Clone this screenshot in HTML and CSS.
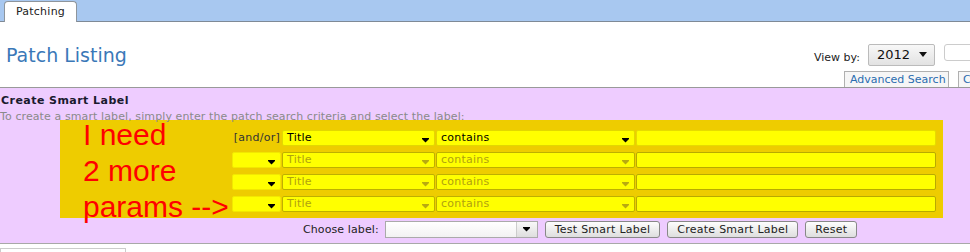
FILE: index.html
```html
<!DOCTYPE html>
<html>
<head>
<meta charset="utf-8">
<link rel="stylesheet" href="styles.css">
</head>
<body>
<div class="topbar"><div class="tab">Patching</div></div>
<div class="header">
  <div class="title-col"><h1 class="title">Patch Listing</h1></div>
  <div class="right-col">
    <div class="viewby">
      <span class="viewby-label">View by:</span>
      <div class="year-btn">2012 <svg class="arr" width="8" height="5" viewBox="0 0 8 5"><path d="M0 0H8L4 5Z" fill="#111"/></svg></div>
      <div class="search-input"></div>
    </div>
    <div class="tabs">
      <div class="subtab">Advanced Search</div>
      <div class="subtab">C</div>
    </div>
  </div>
</div>
<div class="panel">
  <div class="panel-title">Create Smart Label</div>
  <div class="panel-sub">To create a smart label, simply enter the patch search criteria and select the label:</div>
  <div class="highlight">
    <div class="note">
      <div>I need</div>
      <div>2 more</div>
      <div>params --&gt;</div>
    </div>
    <div class="rows">
      <div class="row">
        <div class="andor">[and/or]</div>
        <div class="sel on">Title<svg class="sarr" width="7" height="5" viewBox="0 0 7 5"><path d="M0 0H7V1L3.5 4.5L0 1Z" fill="#000"/></svg></div>
        <div class="sel on">contains<svg class="sarr" width="7" height="5" viewBox="0 0 7 5"><path d="M0 0H7V1L3.5 4.5L0 1Z" fill="#000"/></svg></div>
        <div class="inp on"></div>
      </div>
      <div class="row">
        <div class="sel small"><svg class="sarr" width="7" height="5" viewBox="0 0 7 5"><path d="M0 0H7V1L3.5 4.5L0 1Z" fill="#000"/></svg></div>
        <div class="sel off">Title<svg class="sarr" width="7" height="5" viewBox="0 0 7 5"><path d="M0 0H7V1L3.5 4.5L0 1Z" fill="#b8aa10"/></svg></div>
        <div class="sel off">contains<svg class="sarr" width="7" height="5" viewBox="0 0 7 5"><path d="M0 0H7V1L3.5 4.5L0 1Z" fill="#b8aa10"/></svg></div>
        <div class="inp off"></div>
      </div>
      <div class="row">
        <div class="sel small"><svg class="sarr" width="7" height="5" viewBox="0 0 7 5"><path d="M0 0H7V1L3.5 4.5L0 1Z" fill="#000"/></svg></div>
        <div class="sel off">Title<svg class="sarr" width="7" height="5" viewBox="0 0 7 5"><path d="M0 0H7V1L3.5 4.5L0 1Z" fill="#b8aa10"/></svg></div>
        <div class="sel off">contains<svg class="sarr" width="7" height="5" viewBox="0 0 7 5"><path d="M0 0H7V1L3.5 4.5L0 1Z" fill="#b8aa10"/></svg></div>
        <div class="inp off"></div>
      </div>
      <div class="row">
        <div class="sel small"><svg class="sarr" width="7" height="5" viewBox="0 0 7 5"><path d="M0 0H7V1L3.5 4.5L0 1Z" fill="#000"/></svg></div>
        <div class="sel off">Title<svg class="sarr" width="7" height="5" viewBox="0 0 7 5"><path d="M0 0H7V1L3.5 4.5L0 1Z" fill="#b8aa10"/></svg></div>
        <div class="sel off">contains<svg class="sarr" width="7" height="5" viewBox="0 0 7 5"><path d="M0 0H7V1L3.5 4.5L0 1Z" fill="#b8aa10"/></svg></div>
        <div class="inp off"></div>
      </div>
    </div>
  </div>
  <div class="actions">
    <span class="choose">Choose label:</span>
    <div class="label-sel"><div class="label-field"></div><div class="label-btn"><svg width="7" height="5" viewBox="0 0 7 5"><path d="M0 0H7V1L3.5 4.5L0 1Z" fill="#000"/></svg></div></div>
    <div class="btn">Test Smart Label</div>
    <div class="btn">Create Smart Label</div>
    <div class="btn">Reset</div>
  </div>
</div>
<div class="footer"><div class="footbox"></div></div>
</body>
</html>
```
FILE: styles.css
```css
html, body { margin: 0; padding: 0; }
body {
  width: 970px;
  height: 252px;
  overflow: hidden;
  background: #fff;
  font-family: "DejaVu Sans", Verdana, sans-serif;
  font-size: 11px;
  letter-spacing: 0.25px;
  color: #222;
}
.topbar {
  height: 21px;
  background: #a8c8f0;
  border-bottom: 1px solid #7f8a96;
  display: flex;
  align-items: flex-end;
}
.tab {
  margin-left: 4px;
  margin-bottom: -1px;
  width: 71px;
  height: 20px;
  background: #fff;
  border: 1px solid #8e959c;
  border-bottom: none;
  border-radius: 4px 4px 0 0;
  line-height: 19px;
  text-align: center;
  color: #222;
}
.header {
  height: 65px;
  display: flex;
}
.title-col { width: 808px; flex: none; }
.title {
  margin: 22px 0 0 6px;
  font-size: 19px;
  font-weight: normal;
  line-height: 22px;
  letter-spacing: 0;
  color: #3a78b8;
}
.right-col {
  flex: none;
  width: 200px;
  display: flex;
  flex-direction: column;
  justify-content: space-between;
}
.viewby {
  margin-top: 22px;
  display: flex;
  align-items: flex-start;
  white-space: nowrap;
}
.viewby-label {
  flex: none;
  margin-left: 6px;
  margin-top: 7px;
  line-height: 13px;
  letter-spacing: 0;
  color: #222;
}
.year-btn {
  flex: none;
  margin-left: 8px;
  width: 67px;
  height: 22px;
  border: 1px solid #bbb;
  border-radius: 2px;
  background: linear-gradient(#f8f8f8, #e2e2e2);
  font-size: 13px;
  letter-spacing: 0;
  line-height: 20px;
  padding-left: 8px;
  box-sizing: border-box;
  color: #111;
  display: flex;
  align-items: center;
  gap: 6px;
}
.year-btn .arr { margin-left: 3px; margin-top: -1px; }
.search-input {
  flex: none;
  margin-left: 9px;
  width: 60px;
  height: 17px;
  border: 1px solid #ccc;
  border-radius: 3px;
  box-sizing: border-box;
  background: #fff;
}
.tabs {
  display: flex;
  gap: 9px;
  margin-left: 36px;
}
.subtab {
  flex: none;
  height: 16px;
  line-height: 15px;
  border: 1px solid #b0b0b0;
  border-bottom: none;
  background: #f6f6f6;
  color: #2a6cb0;
  padding: 0 5px;
  box-sizing: border-box;
  white-space: nowrap;
  letter-spacing: 0;
}
.subtab:first-child { width: 105px; }
.subtab:last-child { width: 40px; padding-left: 4px; }
.panel {
  background: #eeccff;
  border-top: 1px solid #999;
  border-bottom: 1px solid #a8a8a8;
  padding-top: 6px;
  height: 149px;
}
.panel-title {
  margin-left: 1px;
  font-weight: bold;
  line-height: 13px;
  letter-spacing: 0.45px;
  color: #1a1a2e;
}
.panel-sub {
  margin: 3px 0 0 0;
  line-height: 13px;
  letter-spacing: 0.1px;
  color: #8a8a8a;
  white-space: nowrap;
}
.highlight {
  margin: -3px 0 0 60px;
  width: 883px;
  height: 98px;
  background: #eecc00;
  display: flex;
}
.note {
  width: 149px;
  padding-left: 23px;
  flex: none;
  font-family: "Liberation Sans", Arial, sans-serif;
  font-size: 30px;
  letter-spacing: 0;
  line-height: 36px;
  color: #ff0000;
  margin-top: -3px;
  white-space: nowrap;
}
.rows {
  padding-top: 10px;
  display: flex;
  flex-direction: column;
  gap: 6px;
}
.row {
  display: grid;
  grid-template-columns: 49px 153px 199px 300px;
  column-gap: 1px;
  height: 16px;
}
.andor {
  text-align: right;
  line-height: 16px;
  color: #333;
  padding-right: 1px;
}
.sel {
  position: relative;
  background: #ffff00;
  border: 1px solid #e2d800;
  border-radius: 2px;
  box-sizing: border-box;
  line-height: 14px;
  padding-left: 4px;
  color: #000;
}
.sel.small { border-color: #f2e800; }
.sel.off { border-color: #beb000; color: #b0a210; }
.sarr {
  position: absolute;
  right: 5px;
  top: 7px;
}
.inp {
  background: #ffff00;
  border: 1px solid #e6dc00;
  border-radius: 2px;
  box-sizing: border-box;
}
.inp.off { border-color: #b8aa00; }
.actions {
  margin: 3px 0 0 303px;
  display: flex;
  align-items: center;
  height: 17px;
}
.choose {
  color: #222;
  margin-right: 6px;
  letter-spacing: 0.1px;
}
.label-sel {
  display: flex;
  width: 153px;
  height: 17px;
  border: 1px solid #aaa;
  box-sizing: border-box;
  margin-right: 7px;
}
.label-field {
  flex: 1;
  background: linear-gradient(#ffffff, #f2f2f2);
}
.label-btn {
  width: 20px;
  border-left: 1px solid #ccc;
  background: linear-gradient(#f8f8f8, #dedede);
  display: flex;
  align-items: center;
  justify-content: center;
}
.btn {
  height: 17px;
  box-sizing: border-box;
  border: 1px solid #888;
  border-radius: 3px;
  background: linear-gradient(#fdfdfd, #dedede);
  line-height: 15px;
  padding: 0 9px;
  color: #222;
  margin-right: 7px;
  white-space: nowrap;
}
.footer { padding-top: 4px; }
.footbox {
  width: 126px;
  height: 4px;
  border: 1px solid #ccc;
  border-bottom: none;
  box-sizing: border-box;
}
```
